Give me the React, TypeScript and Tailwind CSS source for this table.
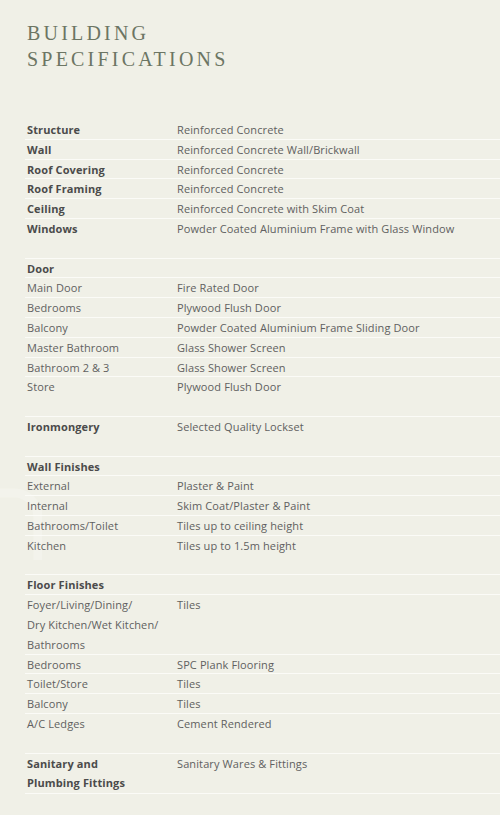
import React from "react";

type Row = {
  label?: string[];
  value?: string;
  bold?: boolean;
  spacer?: boolean;
  noLine?: boolean;
};

const rows: Row[] = [
  { label: ["Structure"], value: "Reinforced Concrete", bold: true, noLine: true },
  { label: ["Wall"], value: "Reinforced Concrete Wall/Brickwall", bold: true },
  { label: ["Roof Covering"], value: "Reinforced Concrete", bold: true },
  { label: ["Roof Framing"], value: "Reinforced Concrete", bold: true },
  { label: ["Ceiling"], value: "Reinforced Concrete with Skim Coat", bold: true },
  { label: ["Windows"], value: "Powder Coated Aluminium Frame with Glass Window", bold: true },
  { spacer: true },
  { label: ["Door"], bold: true },
  { label: ["Main Door"], value: "Fire Rated Door" },
  { label: ["Bedrooms"], value: "Plywood Flush Door" },
  { label: ["Balcony"], value: "Powder Coated Aluminium Frame Sliding Door" },
  { label: ["Master Bathroom"], value: "Glass Shower Screen" },
  { label: ["Bathroom 2 & 3"], value: "Glass Shower Screen" },
  { label: ["Store"], value: "Plywood Flush Door" },
  { spacer: true },
  { label: ["Ironmongery"], value: "Selected Quality Lockset", bold: true },
  { spacer: true },
  { label: ["Wall Finishes"], bold: true },
  { label: ["External"], value: "Plaster & Paint" },
  { label: ["Internal"], value: "Skim Coat/Plaster & Paint" },
  { label: ["Bathrooms/Toilet"], value: "Tiles up to ceiling height" },
  { label: ["Kitchen"], value: "Tiles up to 1.5m height" },
  { spacer: true },
  { label: ["Floor Finishes"], bold: true },
  { label: ["Foyer/Living/Dining/", "Dry Kitchen/Wet Kitchen/", "Bathrooms"], value: "Tiles" },
  { label: ["Bedrooms"], value: "SPC Plank Flooring" },
  { label: ["Toilet/Store"], value: "Tiles" },
  { label: ["Balcony"], value: "Tiles" },
  { label: ["A/C Ledges"], value: "Cement Rendered" },
  { spacer: true },
  { label: ["Sanitary and", "Plumbing Fittings"], value: "Sanitary Wares & Fittings", bold: true },
];

export default function App() {
  return (
    <div className="relative w-[500px] h-[815px] overflow-hidden bg-[#f0f0e7] [font-family:'Open_Sans',sans-serif]">
      <svg
        className="absolute left-0 top-[488px]"
        width="42"
        height="72"
        viewBox="0 0 42 72"
        fill="none"
      >
        <path d="M0 5 H14 A24 24 0 0 1 38 29 V72" stroke="#f3f3ec" strokeWidth="9" />
      </svg>
      <div className="relative pt-[20px] pl-[27px]">
        <h1 className="text-[20px] leading-[26px] tracking-[0.16em] text-[#6c7563] [font-family:'Liberation_Serif',serif] font-normal">
          BUILDING
          <br />
          SPECIFICATIONS
        </h1>
      </div>
      <div className="relative mt-[48px] ml-[25px]">
        {rows.map((r, i) => (
          <div
            key={i}
            className={`flex text-[11px] leading-[19.8px] tracking-[0.01em] ${
              r.spacer || r.noLine ? "" : "shadow-[0_-1px_0_#fbfbf7]"
            }`}
          >
            {r.spacer ? (
              <div className="h-[19.8px]" />
            ) : (
              <>
                <div
                  className={`w-[152px] shrink-0 pl-[2px] ${
                    r.bold ? "font-bold text-[#4b4b4b]" : "font-medium text-[#606060]"
                  }`}
                >
                  {r.label!.map((l, j) => (
                    <div key={j}>{l}</div>
                  ))}
                </div>
                <div className="font-medium text-[#606060]">{r.value}</div>
              </>
            )}
          </div>
        ))}
        <div className="h-px bg-[#fbfbf7]" />
      </div>
    </div>
  );
}
